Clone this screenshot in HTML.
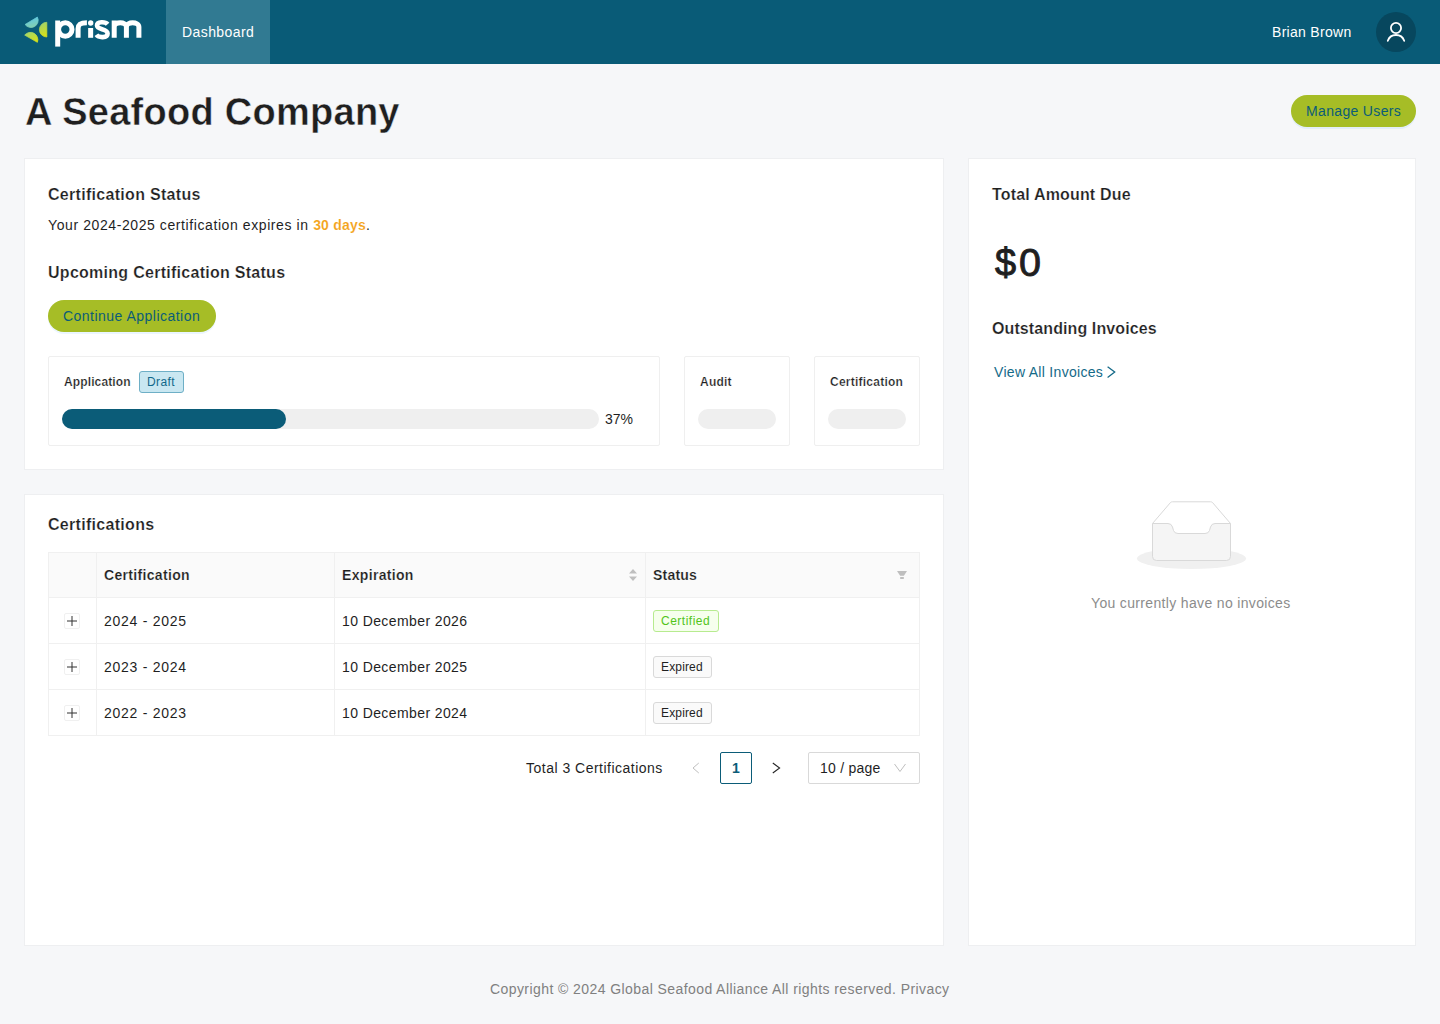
<!DOCTYPE html>
<html>
<head>
<meta charset="utf-8">
<style>
html,body{margin:0;padding:0;}
body{width:1440px;height:1024px;position:relative;overflow:hidden;background:#f6f7f9;font-family:"Liberation Sans",sans-serif;color:#1f1f1f;}
.a{position:absolute;}
.t{position:absolute;white-space:nowrap;line-height:1;}
.hdr{left:0;top:0;width:1440px;height:64px;background:#095b77;}
.tab{left:166px;top:0;width:104px;height:64px;background:#317a92;}
.card{background:#fff;border:1px solid #eeeff1;box-sizing:border-box;}
.b16{font-size:16px;font-weight:700;-webkit-text-stroke:0.2px #fff;}
.r14{font-size:14px;}
.btn{background:#a6bd26;border-radius:16px;height:32px;box-shadow:0 2px 0 rgba(5,145,255,0.08);}
.box{border:1px solid #efefef;border-radius:2px;box-sizing:border-box;background:#fff;}
.bar{background:#efefef;border-radius:10px;height:20px;}
.cell{border-right:1px solid #f0f0f0;}
.hline{height:1px;background:#f0f0f0;}
</style>
</head>
<body>
<!-- header -->
<div class="a hdr"></div>
<div class="a tab"></div>
<svg class="a" style="left:0;top:0" width="160" height="64" viewBox="0 0 160 64">
  <defs>
    <linearGradient id="lg1" x1="0" y1="0" x2="0.3" y2="1">
      <stop offset="0" stop-color="#58c6ec"/>
      <stop offset="1" stop-color="#80cfb4"/>
    </linearGradient>
    <linearGradient id="lg2" x1="0" y1="0" x2="0.2" y2="1">
      <stop offset="0" stop-color="#9ad074"/>
      <stop offset="1" stop-color="#d5e01c"/>
    </linearGradient>
    <linearGradient id="lg3" x1="0" y1="0" x2="0.7" y2="1">
      <stop offset="0" stop-color="#9dd474"/>
      <stop offset="1" stop-color="#d6e11a"/>
    </linearGradient>
  </defs>
  <g stroke-width="0.8" stroke-linejoin="round">
  <path d="M25.1 24.5 L37.4 17.1 A7.2 7.2 0 0 1 25.1 24.5 Z" fill="url(#lg1)" stroke="url(#lg1)"/>
  <path d="M46.8 22.3 L46.8 37 A7.35 7.35 0 0 1 46.8 22.3 Z" fill="url(#lg2)" stroke="url(#lg2)"/>
  <path d="M24.7 35.1 A7.4 7.4 0 0 1 37.4 42.3 Z" fill="url(#lg3)" stroke="url(#lg3)"/>
  </g>
  <g fill="none" stroke="#fff" stroke-width="5">
    <path d="M57.7 20.5 V46.6"/>
    <circle cx="65.3" cy="29.5" r="6.7"/>
    <path d="M78.1 37.8 V28.5 C78.1 24 81 22.7 86.9 22.7" stroke-width="5"/>
    <path d="M90.65 28 V37.8"/>
    <path d="M107.6 24.2 C105.5 21.6 97 21 97 25.6 C97 30 107.6 28.4 107.6 33.4 C107.6 38.4 98.5 37.8 96.4 34.8" stroke-width="4.6"/>
    <path d="M114.2 37.8 V20.5 M114.2 27 C114.2 21.3 126.4 21.3 126.4 27 V37.8 M126.4 27 C126.4 21.3 138.9 21.3 138.9 27 V37.8"/>
  </g>
  <circle cx="90.7" cy="23" r="2.7" fill="#fff"/>
</svg>
<div class="t r14" style="left:182px;top:25px;color:#fff;letter-spacing:0.42px;">Dashboard</div>
<div class="t r14" style="left:1272px;top:25px;color:#fff;letter-spacing:0.3px;">Brian Brown</div>
<div class="a" style="left:1376px;top:12px;width:40px;height:40px;border-radius:20px;background:#07475e;"></div>
<svg class="a" style="left:1376px;top:12px" width="40" height="40" viewBox="1376 12 40 40">
  <g fill="none" stroke="#fff" stroke-width="1.8" stroke-linecap="round">
    <circle cx="1396" cy="28" r="5.1"/>
    <path d="M1387.8 40.8 A8.7 8.7 0 0 1 1404.2 40.8"/>
  </g>
</svg>

<!-- title -->
<div class="t" style="left:25px;top:93px;font-size:38px;font-weight:700;letter-spacing:0.27px;-webkit-text-stroke:0.45px #f6f7f9;">A Seafood Company</div>
<div class="a btn" style="left:1291px;top:95px;width:125px;"></div>
<div class="t r14" style="left:1306px;top:104px;color:#0b5c78;letter-spacing:0.34px;">Manage Users</div>

<!-- card 1 -->
<div class="a card" style="left:24px;top:158px;width:920px;height:312px;"></div>
<div class="t b16" style="left:48px;top:187px;letter-spacing:0.3px;">Certification Status</div>
<div class="t r14" style="left:48px;top:218px;letter-spacing:0.59px;">Your 2024-2025 certification expires in <span style="color:#f4a41c;font-weight:700;letter-spacing:0.2px;-webkit-text-stroke:0.1px #fff">30 days</span>.</div>
<div class="t b16" style="left:48px;top:265px;letter-spacing:0.275px;">Upcoming Certification Status</div>
<div class="a btn" style="left:48px;top:300px;width:168px;"></div>
<div class="t r14" style="left:63px;top:309px;color:#0b5c78;letter-spacing:0.48px;">Continue Application</div>

<div class="a box" style="left:48px;top:356px;width:612px;height:90px;"></div>
<div class="t" style="left:64px;top:376px;font-size:12px;font-weight:700;letter-spacing:0.12px;-webkit-text-stroke:0.22px #fff;">Application</div>
<div class="a" style="left:139px;top:371px;width:45px;height:22px;box-sizing:border-box;border:1px solid #6eafc6;background:#c9e7f1;border-radius:3px;"></div>
<div class="t" style="left:147px;top:376px;font-size:12px;color:#11688a;letter-spacing:0.4px;">Draft</div>
<div class="a bar" style="left:62px;top:409px;width:537px;"></div>
<div class="a bar" style="left:62px;top:409px;width:224px;background:#0b5c78;"></div>
<div class="t r14" style="left:605px;top:412px;">37%</div>

<div class="a box" style="left:684px;top:356px;width:106px;height:90px;"></div>
<div class="t" style="left:700px;top:376px;font-size:12px;font-weight:700;letter-spacing:0.24px;-webkit-text-stroke:0.22px #fff;">Audit</div>
<div class="a bar" style="left:698px;top:409px;width:78px;"></div>
<div class="a box" style="left:814px;top:356px;width:106px;height:90px;"></div>
<div class="t" style="left:830px;top:376px;font-size:12px;font-weight:700;letter-spacing:0.24px;-webkit-text-stroke:0.22px #fff;">Certification</div>
<div class="a bar" style="left:828px;top:409px;width:78px;"></div>

<!-- card 2 -->
<div class="a card" style="left:24px;top:494px;width:920px;height:452px;"></div>
<div class="t b16" style="left:48px;top:517px;letter-spacing:0.3px;">Certifications</div>
<!-- table -->
<div class="a" style="left:48px;top:552px;width:872px;height:46px;background:#fafafa;"></div>
<div class="a" style="left:48px;top:552px;width:872px;height:184px;box-sizing:border-box;border:1px solid #f0f0f0;"></div>
<div class="a hline" style="left:48px;top:597px;width:872px;"></div>
<div class="a hline" style="left:48px;top:643px;width:872px;"></div>
<div class="a hline" style="left:48px;top:689px;width:872px;"></div>
<div class="a" style="left:96px;top:552px;width:1px;height:184px;background:#f0f0f0;"></div>
<div class="a" style="left:334px;top:552px;width:1px;height:184px;background:#f0f0f0;"></div>
<div class="a" style="left:645px;top:552px;width:1px;height:184px;background:#f0f0f0;"></div>

<div class="t" style="left:104px;top:568px;font-size:14px;font-weight:700;letter-spacing:0.33px;-webkit-text-stroke:0.18px #fafafa;">Certification</div>
<div class="t" style="left:342px;top:568px;font-size:14px;font-weight:700;letter-spacing:0.33px;-webkit-text-stroke:0.18px #fafafa;">Expiration</div>
<div class="t" style="left:653px;top:568px;font-size:14px;font-weight:700;letter-spacing:0.2px;-webkit-text-stroke:0.18px #fafafa;">Status</div>
<svg class="a" style="left:627px;top:566px" width="12" height="18" viewBox="0 0 12 18">
  <path d="M2 7.5 L6 3 L10 7.5 Z M2 10.5 L6 15 L10 10.5 Z" fill="#bfbfbf"/>
</svg>
<svg class="a" style="left:895px;top:568px" width="14" height="14" viewBox="0 0 14 14">
  <path d="M2 3 H12 L8.9 7.7 H5.1 Z M5.2 9 H8.8 V11 H5.2 Z" fill="#bfbfbf"/>
</svg>

<!-- rows -->
<div class="a" style="left:64px;top:613px;width:16px;height:16px;box-sizing:border-box;border:1px solid #f0f0f0;border-radius:2px;"></div>
<div class="a" style="left:64px;top:659px;width:16px;height:16px;box-sizing:border-box;border:1px solid #f0f0f0;border-radius:2px;"></div>
<div class="a" style="left:64px;top:705px;width:16px;height:16px;box-sizing:border-box;border:1px solid #f0f0f0;border-radius:2px;"></div>
<svg class="a" style="left:64px;top:598px" width="16" height="138" viewBox="0 0 16 138">
  <g stroke="#333" stroke-width="1">
    <path d="M3 23 H13 M8 18 V28"/>
    <path d="M3 69 H13 M8 64 V74"/>
    <path d="M3 115 H13 M8 110 V120"/>
  </g>
</svg>
<div class="t r14" style="left:104px;top:614px;letter-spacing:0.74px;">2024 - 2025</div>
<div class="t r14" style="left:342px;top:614px;letter-spacing:0.4px;">10 December 2026</div>
<div class="t r14" style="left:104px;top:660px;letter-spacing:0.74px;">2023 - 2024</div>
<div class="t r14" style="left:342px;top:660px;letter-spacing:0.4px;">10 December 2025</div>
<div class="t r14" style="left:104px;top:706px;letter-spacing:0.74px;">2022 - 2023</div>
<div class="t r14" style="left:342px;top:706px;letter-spacing:0.4px;">10 December 2024</div>

<div class="a" style="left:653px;top:610px;width:66px;height:22px;box-sizing:border-box;border:1px solid #b7eb8f;background:#f6ffed;border-radius:3px;"></div>
<div class="t" style="left:661px;top:615px;font-size:12px;color:#52c41a;letter-spacing:0.5px;">Certified</div>
<div class="a" style="left:653px;top:656px;width:59px;height:22px;box-sizing:border-box;border:1px solid #d9d9d9;background:#fafafa;border-radius:3px;"></div>
<div class="t" style="left:661px;top:661px;font-size:12px;letter-spacing:0.15px;">Expired</div>
<div class="a" style="left:653px;top:702px;width:59px;height:22px;box-sizing:border-box;border:1px solid #d9d9d9;background:#fafafa;border-radius:3px;"></div>
<div class="t" style="left:661px;top:707px;font-size:12px;letter-spacing:0.15px;">Expired</div>

<!-- pagination -->
<div class="t r14" style="left:526px;top:761px;letter-spacing:0.49px;">Total 3 Certifications</div>
<svg class="a" style="left:688px;top:760px" width="16" height="16" viewBox="0 0 16 16">
  <path d="M10.8 3 L5 8 L10.8 13" fill="none" stroke="#bfbfbf" stroke-width="1"/>
</svg>
<div class="a" style="left:720px;top:752px;width:32px;height:32px;box-sizing:border-box;border:1px solid #0b5c78;border-radius:2px;background:#fff;"></div>
<div class="t" style="left:732px;top:761px;font-size:14px;font-weight:700;color:#0b5c78;">1</div>
<svg class="a" style="left:768px;top:760px" width="16" height="16" viewBox="0 0 16 16">
  <path d="M4.8 3 L11.6 8 L4.8 13" fill="none" stroke="#262626" stroke-width="1.1"/>
</svg>
<div class="a" style="left:808px;top:752px;width:112px;height:32px;box-sizing:border-box;border:1px solid #d9d9d9;border-radius:2px;background:#fff;"></div>
<div class="t r14" style="left:820px;top:761px;letter-spacing:0.25px;">10 / page</div>
<svg class="a" style="left:892px;top:760px" width="16" height="16" viewBox="0 0 16 16">
  <path d="M2.5 4 L8 11.5 L13.5 4" fill="none" stroke="#bfbfbf" stroke-width="1"/>
</svg>

<!-- right card -->
<div class="a card" style="left:968px;top:158px;width:448px;height:788px;"></div>
<div class="t b16" style="left:992px;top:187px;letter-spacing:0.17px;">Total Amount Due</div>
<div class="t" style="left:995px;top:243px;font-size:38px;-webkit-text-stroke:0.95px #1f1f1f;letter-spacing:2.8px;">$<span style="font-size:39.5px;letter-spacing:0">0</span></div>
<div class="t b16" style="left:992px;top:321px;letter-spacing:0.1px;">Outstanding Invoices</div>
<div class="t r14" style="left:994px;top:365px;color:#156a88;letter-spacing:0.3px;">View All Invoices</div>
<svg class="a" style="left:1104px;top:364px" width="14" height="16" viewBox="0 0 14 16">
  <path d="M3.6 2.7 L10.7 8 L3.6 13.4" fill="none" stroke="#156a88" stroke-width="1.3"/>
</svg>

<!-- empty -->
<svg class="a" style="left:1130px;top:495px" width="124" height="80" viewBox="1130 495 124 80">
  <ellipse cx="1191.5" cy="558.5" rx="54.5" ry="10.5" fill="#f0f0f0"/>
  <path d="M1152.5 523.5 L1170.5 502.5 Q1171.3 501.8 1172.5 501.8 H1210.5 Q1211.7 501.8 1212.5 502.5 L1230.5 523.5" fill="#fff" stroke="#d9d9d9" stroke-width="1"/>
  <path d="M1152.5 523.5 H1168 Q1171.5 523.5 1172.5 527 L1173.5 530.5 Q1174.5 533.5 1178 533.5 H1205 Q1208.5 533.5 1209.5 530.5 L1210.5 527 Q1211.5 523.5 1215 523.5 H1230.5 V556.5 Q1230.5 560.5 1226.5 560.5 H1156.5 Q1152.5 560.5 1152.5 556.5 Z" fill="#f5f5f5" stroke="#d9d9d9" stroke-width="1"/>
</svg>
<div class="t r14" style="left:1091px;top:596px;color:#8c8c8c;letter-spacing:0.34px;">You currently have no invoices</div>

<!-- footer -->
<div class="t r14" style="left:490px;top:982px;color:#808080;letter-spacing:0.42px;">Copyright © 2024 Global Seafood Alliance All rights reserved. Privacy</div>
</body>
</html>
